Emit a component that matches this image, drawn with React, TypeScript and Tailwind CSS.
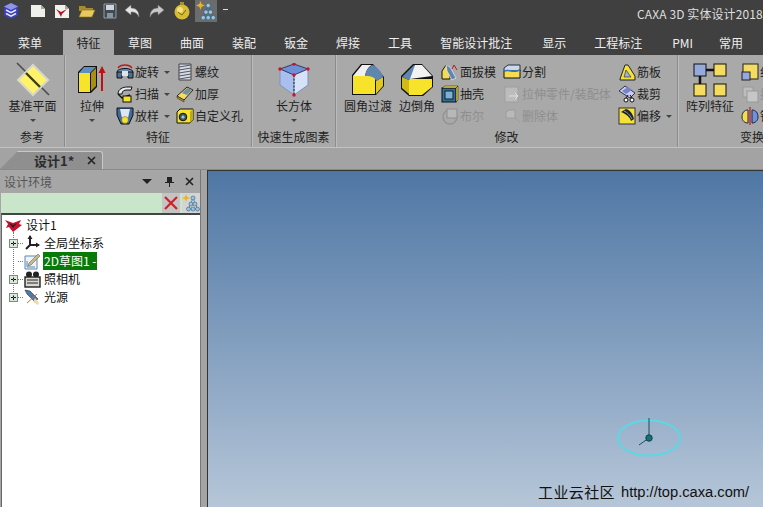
import React from 'react';

const cjk = "font-['Noto_Sans_CJK_SC','Noto_Sans',sans-serif]";

const tabs = ['菜单', '特征', '草图', '曲面', '装配', '钣金', '焊接', '工具', '智能设计批注', '显示', '工程标注', 'PMI', '常用'];

type IconProps = { className?: string };

/* ---------- quick access icons ---------- */
const Logo = () => (
  <svg width="18" height="18" viewBox="0 0 18 18">
    <path d="M9 1l7 3.5v9L9 17l-7-3.5v-9z" fill="#3b3fb8" />
    <path d="M9 1l7 3.5L9 8 2 4.5z" fill="#8f94ea" />
    <path d="M4 8l5 2.6L14 8M4 11.5l5 2.6 5-2.6" stroke="#e6e8ff" strokeWidth="1.6" fill="none" />
  </svg>
);
const NewDoc = () => (
  <svg width="16" height="16" viewBox="0 0 16 16">
    <path d="M1 2h10l4 4v8H1z" fill="#f0f0ea" />
    <path d="M11 2l4 4h-4z" fill="#a9a9a0" />
  </svg>
);
const OpenRed = () => (
  <svg width="16" height="16" viewBox="0 0 16 16">
    <path d="M1 2h10l4 4v9H1z" fill="#f2f2ec" />
    <path d="M11 2l4 4h-4z" fill="#a9a9a0" />
    <path d="M2 6l5 3 6-3-5 5-1 3-2-4z" fill="#b0102a" />
  </svg>
);
const Folder = () => (
  <svg width="18" height="16" viewBox="0 0 18 16">
    <path d="M1 3h6l1 2h7v3H1z" fill="#a88a30" />
    <path d="M1 14l3-7h13l-3 7z" fill="#e8c860" stroke="#8a7020" strokeWidth=".6" />
  </svg>
);
const Save = () => (
  <svg width="14" height="16" viewBox="0 0 14 16">
    <path d="M1 1h12v14H1z" fill="#3f4a55" stroke="#aab2ba" strokeWidth=".8" />
    <rect x="3" y="2" width="8" height="5" fill="#cfd6dc" />
    <rect x="4" y="10" width="6" height="5" fill="#8a949d" />
  </svg>
);
const Undo = ({ flip = false, light = false }: { flip?: boolean; light?: boolean }) => (
  <svg width="17" height="14" viewBox="0 0 17 14" className={flip ? '-scale-x-100' : ''}>
    <path d="M7 1L1 6l6 5V8c4 0 6 1 8 5 0-6-3-9-8-9z" fill={light ? '#c8c8c8' : '#e4e4e4'} stroke="#777" strokeWidth=".5" />
  </svg>
);
const Bulb = () => (
  <svg width="18" height="20" viewBox="0 0 18 20">
    <circle cx="9" cy="11" r="7.5" fill="#d8bb35" />
    <circle cx="7" cy="9" r="3" fill="#f2e27a" />
    <rect x="7" y="1" width="4" height="3" fill="#a89030" />
    <path d="M5 11l4 3 4-5" stroke="#7a6410" fill="none" />
  </svg>
);
const StarTree = ({ size = 18 }: { size?: number }) => (
  <svg width={size} height={size} viewBox="0 0 18 18">
    <path d="M4 0l1 2.8L8 4 5 5.2 4 8 3 5.2 0 4l3-1.2z" fill="#ecb420" />
    <path d="M11 4L6.5 15M11 4l4.5 11M9 10h4M6.5 15h9" stroke="#2f5f85" strokeWidth=".6" />
    {[[11, 4], [9, 10], [13, 10], [6.5, 15], [11, 15], [15.5, 15]].map(([x, y], i) => (
      <circle key={i} cx={x} cy={y} r="2" fill="#9cc4de" stroke="#2f5f85" strokeWidth=".6" />
    ))}
  </svg>
);

/* ---------- ribbon large icons ---------- */
const PlaneIcon = () => (
  <svg width="36" height="36" viewBox="0 0 36 36">
    <path d="M2 1l32 32" stroke="#4a4a4a" strokeWidth="1.6" />
    <path d="M18 3l15 15-15 15L3 18z" fill="#fff36a" stroke="#d8d8c8" strokeWidth="2" />
    <path d="M11 11l14 14" stroke="#3b3b20" strokeWidth="2.4" />
  </svg>
);
const ExtrudeIcon = () => (
  <svg width="30" height="30" viewBox="0 0 30 30">
    <path d="M1 7l6-6h13v21l-6 6H1z" fill="#111" />
    <path d="M2 8h11v19H2z" fill="#f6e32a" />
    <path d="M2 8l5-6h12l-6 6z" fill="#5e8fc0" />
    <path d="M14 8l5-5v18l-5 5z" fill="#a68f12" />
    <path d="M25 26V6" stroke="#c01010" strokeWidth="2" />
    <path d="M25 1l3.5 7h-7z" fill="#c01010" />
  </svg>
);
const BoxIcon = () => (
  <svg width="32" height="34" viewBox="0 0 32 34">
    <path d="M16 10L2 5v17l14 10z" fill="#a9c0ee" stroke="#7f93b8" />
    <path d="M16 10l14-5v17L16 32z" fill="#d6e2f8" stroke="#7f93b8" />
    <path d="M16 1l14 5-14 6L2 6z" fill="#6f8fd8" stroke="#223" strokeWidth=".8" />
    <path d="M16 12v20" stroke="#223" strokeDasharray="2 1.5" />
    {[[16, 1], [30, 6], [16, 12], [2, 6], [16, 32]].map(([x, y], i) => (
      <circle key={i} cx={x} cy={y} r="1.7" fill="#d01030" />
    ))}
  </svg>
);
const FilletIcon = () => (
  <svg width="34" height="34" viewBox="0 0 34 34">
    <path d="M1 12L10 1h12l11 13v9l-8 9H1z" fill="#111" />
    <path d="M2 13h22v18H2z" fill="#f6e32a" />
    <path d="M25 18l7-4v9l-7 8z" fill="#e0c81f" />
    <path d="M2 13l9-11h10c-4 2-6 6-7 11z" fill="#f0f0f0" />
    <path d="M14 13c1-5 3-9 8-11 5 3 9 7 10 12l-7 4c-1-3-3-5-11-5z" fill="#5f86b0" />
  </svg>
);
const ChamferIcon = () => (
  <svg width="34" height="34" viewBox="0 0 34 34">
    <path d="M1 13L13 1h9l11 12v11l-10 9H9l-8-7z" fill="#111" />
    <path d="M9 16h23v8l-10 8H9z" fill="#f6e32a" />
    <path d="M2 14l7 3v14l-7-6z" fill="#d0ba18" />
    <path d="M2 14L14 2l7 5L9 17z" fill="#5f86b0" />
    <path d="M15 2h7l10 11-22 3z" fill="#f2f2f2" />
  </svg>
);
const PatternIcon = () => (
  <svg width="34" height="34" viewBox="0 0 34 34">
    <path d="M13 7h8M7 13v8" stroke="#111" strokeWidth="2.5" />
    <rect x="1" y="1" width="12" height="12" fill="#95a9dd" stroke="#111" />
    <rect x="21" y="1" width="12" height="12" fill="#f4dc60" stroke="#111" />
    <rect x="1" y="21" width="12" height="12" fill="#f4dc60" stroke="#111" />
    <rect x="21" y="21" width="12" height="12" fill="#f4dc60" stroke="#111" />
  </svg>
);

/* ---------- ribbon small icons ---------- */
const Small = ({ children }: { children: React.ReactNode }) => (
  <svg width="18" height="18" viewBox="0 0 18 18" className="shrink-0">{children}</svg>
);
const icons: Record<string, React.ReactNode> = {
  revolve: <Small><path d="M2 5c3-4 11-4 14 0" stroke="#c01818" fill="none" strokeWidth="1.4" /><ellipse cx="9" cy="9" rx="8" ry="3.5" fill="#6c8fb0" stroke="#111" /><path d="M1 9v6h5v-3h6v3h5V9z" fill="#4d7090" stroke="#111" /><rect x="6" y="8" width="6" height="5" fill="#e0e4ea" /></Small>,
  sweep: <Small><path d="M2 9c0-5 5-7 9-7h5l-1 3h-4c-3 0-5 1-5 4z" fill="#e8edf5" stroke="#111" /><path d="M2 9l4 4 8-3" stroke="#111" fill="none" strokeWidth="1.4" /><rect x="7" y="11" width="8" height="6" fill="#f6e32a" stroke="#111" /></Small>,
  loft: <Small><path d="M1 1h16v7l-4 9H5L1 8z" fill="#3f6a9c" stroke="#111" /><path d="M4 2h10l-2 9H6z" fill="#dfe6f2" /><circle cx="9" cy="13" r="3.4" fill="#f6e32a" stroke="#555" strokeWidth=".5" /></Small>,
  thread: <Small><path d="M3 1h12v16H3z" fill="#d5dbe2" stroke="#444" /><path d="M3 4l12-2M3 7l12-2M3 10l12-2M3 13l12-2M3 16l12-2" stroke="#556" /></Small>,
  thicken: <Small><path d="M1 11L11 2l6 3-9 10z" fill="#f4dc60" stroke="#222" /><path d="M6 8l5-5 5 2-5 5z" fill="#6f8ea8" /><path d="M1 11l7 4v2l-7-4z" fill="#a89320" stroke="#222" strokeWidth=".5" /></Small>,
  hole: <Small><path d="M1 5l3-3h13v11l-3 3H1z" fill="#f6e32a" stroke="#111" /><path d="M14 5l3-3v11l-3 3z" fill="#c0a818" /><circle cx="7" cy="10" r="3.8" fill="#456" stroke="#111" /><circle cx="7" cy="10" r="1.6" fill="#9cc" /></Small>,
  draft: <Small><path d="M1 8l4-6 4 3v11H1z" fill="#f4dc50" stroke="#111" /><path d="M5 2l4 2 6 11-4 2-5-9z" fill="#5f86b0" stroke="#eee" strokeWidth=".7" /><path d="M11 6l2-4 3 5" stroke="#c01818" fill="none" /></Small>,
  shell: <Small><rect x="1" y="3" width="14" height="14" fill="#2f6f9c" stroke="#111" /><path d="M1 3l3-2h13l-2 2z" fill="#f4dc50" stroke="#111" strokeWidth=".5" /><path d="M15 3l2-2v14l-2 2z" fill="#e2c83a" stroke="#111" strokeWidth=".5" /><rect x="4" y="6" width="8" height="8" fill="#7fb0cf" stroke="#123" /></Small>,
  boolean: <Small><circle cx="9" cy="10" r="7" fill="none" stroke="#939393" strokeWidth="1.4" /><rect x="6" y="2" width="10" height="9" fill="#b8b8b8" stroke="#939393" strokeWidth="1.2" /></Small>,
  split: <Small><path d="M1 5l4-3h12v6H1z" fill="#cdd8e8" stroke="#234" /><path d="M1 8c5-2 9 2 16-1v8H1z" fill="#f4dc50" stroke="#111" /><path d="M1 8c5-2 9 2 16-1" stroke="#3f78b0" strokeWidth="1.6" fill="none" /></Small>,
  extrudePart: <Small><rect x="2" y="2" width="13" height="15" fill="#bcbcbc" stroke="#9f9f9f" /><path d="M6 11h9M12 8l3 3-3 3" stroke="#e2e2e2" fill="none" /></Small>,
  removeBody: <Small><path d="M3 5l3-2h6v8H3z" fill="#b9b9b9" stroke="#9c9c9c" /><path d="M12 11l5 5" stroke="#9c9c9c" /></Small>,
  rib: <Small><path d="M2 16L7 2h3l7 11v4H2z" fill="#f4e23a" stroke="#222" /><path d="M6 14l2-7 5 7z" fill="#9fb0d8" stroke="#222" strokeWidth=".6" /></Small>,
  trim: <Small><path d="M1 6l6-5 10 7-5 5z" fill="#c6cdf0" stroke="#334" /><path d="M4 6l6-4 4 3-6 4z" fill="#7583cc" /><circle cx="8" cy="15" r="2" fill="#fff" stroke="#111" /><circle cx="14" cy="15" r="2" fill="#fff" stroke="#111" /><path d="M8 13l2-3M14 13l-2-3" stroke="#111" /></Small>,
  offset: <Small><rect x="1" y="1" width="16" height="16" fill="#f4e23a" stroke="#333" /><path d="M3 5l5-3c4 1 7 5 8 10l-3 2C12 10 8 7 3 5z" fill="#222" /><path d="M6 4c3 1 6 4 8 8" stroke="#7aa0d0" fill="none" /></Small>,
  combine: <Small><rect x="2" y="1" width="15" height="15" fill="#f4dc60" stroke="#222" /><rect x="1" y="9" width="8" height="8" fill="#95a9dd" stroke="#222" /></Small>,
  copy: <Small><rect x="2" y="2" width="10" height="10" fill="#bdbdbd" stroke="#999" /><rect x="6" y="6" width="11" height="11" fill="#c6c6c6" stroke="#999" /></Small>,
  mirror: <Small><path d="M7 3C3 3 1 6 1 10s3 6 6 6z" fill="#f4dc50" stroke="#224" /><path d="M11 3c4 0 6 3 6 7s-3 6-6 6z" fill="#6f92d8" stroke="#224" /><path d="M9 0v18" stroke="#c01818" strokeWidth="1.2" /></Small>,
};

const Arrow = ({ dim = false }: { dim?: boolean }) => (
  <span className={`inline-block w-0 h-0 border-x-[3px] border-x-transparent border-t-[3px] ${dim ? 'border-t-[#777]' : 'border-t-[#444]'}`} />
);

const Row = ({ icon, label, arrow, off }: { icon: string; label: string; arrow?: boolean; off?: boolean }) => (
  <div className={`flex items-center h-[22px] gap-[1px] whitespace-nowrap ${off ? 'text-[#8e8e8e]' : 'text-[#1e1e1e]'}`}>
    {icons[icon]}
    <span>{label}</span>
    {arrow && <span className="ml-[4px] flex"><Arrow /></span>}
  </div>
);

const Big = ({ icon, label, arrow, className = '' }: { icon: React.ReactNode; label: string; arrow?: boolean; className?: string }) => (
  <div className={`flex flex-col items-center shrink-0 ${className}`}>
    <div className="h-[37px] flex items-center justify-center">{icon}</div>
    <div className="h-[16px] leading-[16px] whitespace-nowrap text-[#1e1e1e]">{label}</div>
    {arrow && <div className="mt-[1px] flex h-[10px] items-center"><Arrow /></div>}
  </div>
);

const Group = ({ width, label, children, last }: { width: string; label: string; children: React.ReactNode; last?: boolean }) => (
  <div className={`flex flex-col shrink-0 h-full ${width} ${last ? '' : 'border-r border-r-[#8c8c8c] shadow-[1px_0_0_#bcbcbc]'}`}>
    <div className="flex-1 flex pt-[6px] min-h-0">{children}</div>
    <div className="h-[19px] leading-[17px] text-center text-[#222] whitespace-nowrap">{label}</div>
  </div>
);

/* ---------- tree ---------- */
const Plus = () => (
  <svg width="9" height="9" viewBox="0 0 9 9" className="shrink-0">
    <rect x=".5" y=".5" width="8" height="8" fill="#dce8dc" stroke="#7c8c7c" />
    <path d="M2 4.5h5M4.5 2v5" stroke="#111" />
  </svg>
);
const TreeRow = ({ plus, icon, children }: { plus?: boolean; icon: React.ReactNode; children: React.ReactNode }) => (
  <div className="flex items-center h-[18px] pl-[7px]">
    <span className="w-[9px] flex shrink-0">{plus && <Plus />}</span>
    <span className="w-[5px] border-t border-dotted border-t-[#777] shrink-0" />
    <span className="w-[18px] ml-[1px] flex shrink-0">{icon}</span>
    {children}
  </div>
);

const Cross = ({ className = '' }: IconProps) => (
  <svg width="11" height="11" viewBox="0 0 11 11" className={className}>
    <path d="M2 2l7 7M9 2l-7 7" stroke="#222" strokeWidth="1.6" />
  </svg>
);

export default function App() {
  return (
    <div className={`w-[763px] h-[507px] overflow-hidden flex flex-col bg-[#a6a6a6] text-[12px] ${cjk}`}>
      {/* title bar */}
      <div className="h-[28px] bg-[#404040] flex items-center shrink-0 overflow-hidden">
        <div className="w-[637px] shrink-0 flex items-center pl-[2px] pb-[6px] h-full">
          <span className="w-[18px] flex"><Logo /></span>
          <span className="ml-[10px] flex"><NewDoc /></span>
          <span className="ml-[8px] flex"><OpenRed /></span>
          <span className="ml-[8px] flex"><Folder /></span>
          <span className="ml-[7px] flex"><Save /></span>
          <span className="ml-[7px] flex"><Undo /></span>
          <span className="ml-[7px] flex"><Undo flip light /></span>
          <span className="ml-[8px] flex"><Bulb /></span>
          <span className="ml-[4px] flex items-center justify-center w-[22px] h-[22px] bg-[#6c6c6c]"><StarTree size={20} /></span>
          <span className="ml-[5px] flex flex-col items-center gap-[1px]">
            <span className="w-[5px] h-px bg-[#ddd]" />
            <Arrow />
          </span>
        </div>
        <div className="shrink-0 whitespace-nowrap text-[#dedede] tracking-[0.1px] pb-[1px]">CAXA 3D 实体设计2018</div>
      </div>

      {/* tabs */}
      <div className="h-[27px] bg-[#404040] flex items-end pl-[4px] shrink-0">
        {tabs.map((t, i) => (
          <div
            key={t}
            className={`h-[25px] leading-[25px] whitespace-nowrap ${i === 1 ? 'px-[13.5px] bg-[#a8a8a8] text-[#1c1c1c]' : 'px-[14px] text-[#eeeeee]'} ${i === 0 ? 'mr-[7px]' : ''} ${i === 9 || i === 11 ? 'ml-[2px]' : ''} ${i === 12 ? 'ml-[-2px]' : ''}`}
          >
            {t}
          </div>
        ))}
      </div>

      {/* ribbon */}
      <div className="h-[93px] shrink-0 bg-[#a9a9a9] flex overflow-hidden border-b border-b-[#c2c2c2]">
        <Group width="w-[65px]" label="参考">
          <Big icon={<PlaneIcon />} label="基准平面" arrow className="w-[65px]" />
        </Group>
        <Group width="w-[187px]" label="特征">
          <Big icon={<ExtrudeIcon />} label="拉伸" arrow className="w-[30px] ml-[12px]" />
          <div className="ml-[9px] flex flex-col">
            <Row icon="revolve" label="旋转" arrow />
            <Row icon="sweep" label="扫描" arrow />
            <Row icon="loft" label="放样" arrow />
          </div>
          <div className="ml-[6px] flex flex-col">
            <Row icon="thread" label="螺纹" />
            <Row icon="thicken" label="加厚" />
            <Row icon="hole" label="自定义孔" />
          </div>
        </Group>
        <Group width="w-[84px]" label="快速生成图素">
          <Big icon={<BoxIcon />} label="长方体" arrow className="w-[84px]" />
        </Group>
        <Group width="w-[342px]" label="修改">
          <Big icon={<FilletIcon />} label="圆角过渡" className="w-[48px] ml-[8px]" />
          <Big icon={<ChamferIcon />} label="边倒角" className="w-[36px] ml-[7px]" />
          <div className="ml-[6px] flex flex-col w-[62px] shrink-0">
            <Row icon="draft" label="面拔模" />
            <Row icon="shell" label="抽壳" />
            <Row icon="boolean" label="布尔" off />
          </div>
          <div className="flex flex-col w-[115px] shrink-0">
            <Row icon="split" label="分割" />
            <Row icon="extrudePart" label="拉伸零件/装配体" off />
            <Row icon="removeBody" label="删除体" off />
          </div>
          <div className="flex flex-col">
            <Row icon="rib" label="筋板" />
            <Row icon="trim" label="裁剪" />
            <Row icon="offset" label="偏移" arrow />
          </div>
        </Group>
        <Group width="w-[148px]" label="变换" last>
          <Big icon={<PatternIcon />} label="阵列特征" className="w-[48px] ml-[8px]" />
          <div className="ml-[7px] flex flex-col">
            <Row icon="combine" label="组合" />
            <Row icon="copy" label="拷贝" off />
            <Row icon="mirror" label="镜像" />
          </div>
        </Group>
      </div>

      {/* document tab strip */}
      <div className="h-[22px] shrink-0 bg-[#a3a3a3] flex items-end border-b border-b-[#8a8a8a]">
        <div className="w-[103px] h-[18px] bg-[#8f8f8f] rounded-tr-[3px] border-r border-t border-r-[#c8c8c8] border-t-[#c8c8c8] [clip-path:polygon(0_100%,18px_0,100%_0,100%_100%)] flex items-center pl-[34px]">
          <span className="text-[13px] font-bold text-[#2c2c2c] whitespace-nowrap">设计1*</span>
          <Cross className="ml-[12px]" />
        </div>
      </div>

      {/* body */}
      <div className="flex-1 flex min-h-0">
        {/* left panel */}
        <div className="w-[200px] shrink-0 flex flex-col pl-[1px] bg-[#a6a6a6]">
          <div className="h-[23px] flex items-center pl-[3px] text-[#555] shrink-0">
            <span className="flex-1">设计环境</span>
            <span className="mr-[13px] w-0 h-0 border-x-[5px] border-x-transparent border-t-[5px] border-t-[#222]" />
            <svg width="9" height="11" viewBox="0 0 9 11" className="mr-[10px]">
              <path d="M2 1h5v5h2v1H5v4H4V7H0V6h2z" fill="#222" />
            </svg>
            <Cross className="mr-[5px]" />
          </div>
          <div className="h-[20px] bg-[#c9e6cb] flex justify-end gap-[2px] shrink-0">
            <span className="w-[18px] h-[20px] bg-[#c4c4c4] flex items-center justify-center">
              <svg width="14" height="14" viewBox="0 0 14 14"><path d="M1 1l12 12M13 1L1 13" stroke="#d02028" strokeWidth="2.2" /></svg>
            </span>
            <span className="w-[18px] h-[20px] bg-[#d4d4d4] flex items-center justify-center"><StarTree size={18} /></span>
          </div>
          <div className="flex-1 bg-white border-t-2 border-l border-t-[#444] border-l-[#666] relative pt-[1px] text-[#111]">
            <span className="absolute left-[11px] top-[17px] h-[66px] border-l border-dotted border-l-[#777]" />
            <div className="flex items-center h-[18px] pl-[2px]">
              <svg width="19" height="16" viewBox="0 0 19 16" className="shrink-0">
                <path d="M1 3l8 3 8-3-2 4 3 1-9 7-4-5-3 1 2-4z" fill="#c8102a" />
                <path d="M5 6l4 2 4-2-4 5z" fill="#222" />
              </svg>
              <span className="ml-[3px]">设计1</span>
            </div>
            <TreeRow plus icon={
              <svg width="17" height="16" viewBox="0 0 17 16">
                <path d="M6 1v9l-4 4M6 10h9" stroke="#222" strokeWidth="2" fill="none" />
                <path d="M6 0l2.5 4h-5zM16 10l-4 2.5v-5z" fill="#222" />
              </svg>
            }>
              <span className="ml-[2px]">全局坐标系</span>
            </TreeRow>
            <TreeRow icon={
              <svg width="17" height="17" viewBox="0 0 17 17">
                <path d="M1 3h12v13H1z" fill="#eef3fa" stroke="#5f86b0" />
                <path d="M4 13l1-3 9-9 2 2-9 9z" fill="#c9b98a" stroke="#6a6a50" strokeWidth=".6" />
                <path d="M3 8v6h8" stroke="#5f86b0" fill="none" />
              </svg>
            }>
              <span className="ml-[1px] bg-[#077a07] text-white h-[18px] leading-[18px] px-[1px] whitespace-nowrap w-[54px]">2D草图1 -</span>
            </TreeRow>
            <TreeRow plus icon={
              <svg width="17" height="17" viewBox="0 0 17 17">
                <circle cx="5" cy="3.5" r="3" fill="#222" />
                <circle cx="12" cy="3.5" r="3" fill="#222" />
                <rect x="1" y="6" width="15" height="10" fill="#d8d8d0" stroke="#222" strokeWidth="1.4" />
                <path d="M3 9h11M3 12h11" stroke="#222" />
              </svg>
            }>
              <span className="ml-[2px]">照相机</span>
            </TreeRow>
            <TreeRow plus icon={
              <svg width="17" height="17" viewBox="0 0 17 17">
                <path d="M1 1l5 1 8 8-3 3-8-8z" fill="#4d78a8" stroke="#234" strokeWidth=".6" />
                <path d="M11 9l4 5-1 2-5-3z" fill="#eed9b0" />
                <path d="M3 14L13 5" stroke="#d06a40" />
              </svg>
            }>
              <span className="ml-[2px]">光源</span>
            </TreeRow>
          </div>
        </div>

        {/* splitter */}
        <div className="w-[7px] shrink-0 bg-[#a4a4a4] border-l border-l-[#777]" />

        {/* viewport */}
        <div className="flex-1 relative border-l border-t border-l-[#333] border-t-[#333] bg-gradient-to-b from-[#4f77a4] to-[#b6c6d8]">
          <svg width="70" height="50" viewBox="0 0 70 50" className="absolute left-[408px] top-[246px]">
            <ellipse cx="33" cy="21" rx="31" ry="17.5" fill="none" stroke="#5ad8e4" strokeWidth="2" />
            <path d="M33 21V1M33 21l-10 7" stroke="#14505a" strokeWidth="1" />
            <circle cx="33" cy="21" r="3.2" fill="#157272" stroke="#0d3f4a" />
          </svg>
          <div className="absolute left-[330px] top-[310px] whitespace-nowrap flex items-center text-[#111]">
            <span className="text-[15px] tracking-[0.4px]">工业云社区</span>
            <span className="ml-[6px] text-[14.7px] font-['Liberation_Sans',sans-serif]">http://top.caxa.com/</span>
          </div>
        </div>
      </div>
    </div>
  );
}
